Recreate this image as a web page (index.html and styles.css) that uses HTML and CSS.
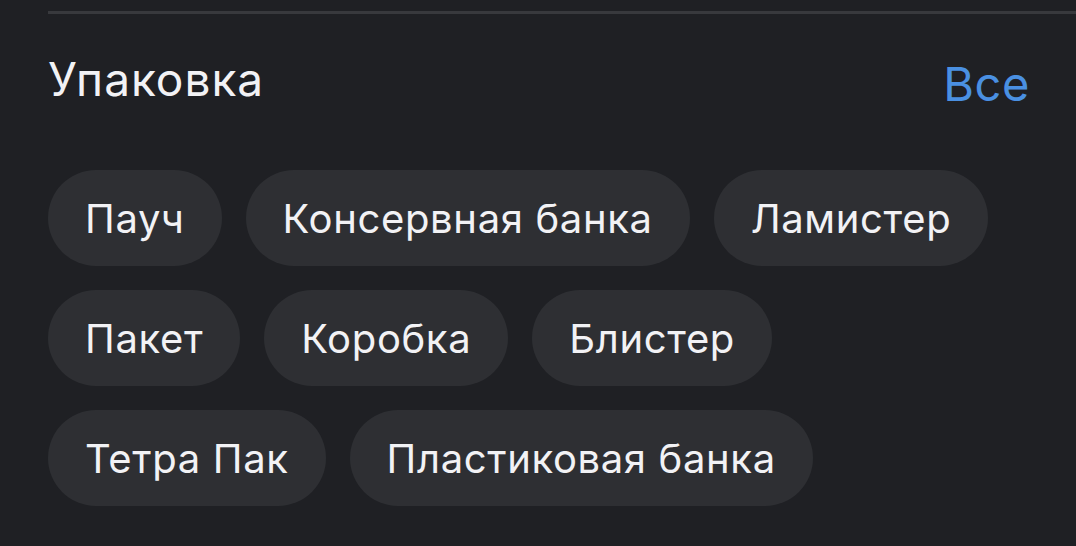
FILE: index.html
```html
<!DOCTYPE html>
<html lang="ru">
<head>
<meta charset="utf-8">
<link rel="stylesheet" href="styles.css">
</head>
<body>
<section class="section">
  <div class="divider"></div>
  <div class="header">
    <h2 class="title">Упаковка</h2>
    <a class="all">Все</a>
  </div>
  <div class="chips">
    <span class="chip">Пауч</span>
    <span class="chip">Консервная банка</span>
    <span class="chip">Ламистер</span>
    <span class="chip">Пакет</span>
    <span class="chip">Коробка</span>
    <span class="chip">Блистер</span>
    <span class="chip">Тетра Пак</span>
    <span class="chip">Пластиковая банка</span>
  </div>
</section>
</body>
</html>
```
FILE: styles.css
```css
html, body {
  margin: 0;
  padding: 0;
  background: #1f2024;
  height: 100%;
  overflow: hidden;
}
body {
  font-family: Inter, "Noto Sans", sans-serif;
  color: #f2f2f5;
}
.section {
  padding-left: 48px;
  padding-top: 11px;
}
.divider {
  height: 3px;
  background: #38393d;
}
.header {
  display: flex;
  justify-content: space-between;
  align-items: flex-start;
  padding-right: 46px;
  margin-top: 37px;
}
.title {
  margin: 0;
  font-size: 46px;
  font-weight: 400;
  line-height: 56px;
  letter-spacing: 1px;
}
.all {
  font-size: 47px;
  line-height: 56px;
  margin-top: 5px;
  letter-spacing: 0.6px;
  color: #4a90e2;
}
.chips {
  display: flex;
  flex-wrap: wrap;
  gap: 24px;
  margin-top: 58px;
  padding-right: 48px;
}
.chip {
  height: 96px;
  display: inline-flex;
  align-items: center;
  padding: 0 37px;
  border-radius: 48px;
  background: #2e2f33;
  font-size: 40px;
  letter-spacing: 0.65px;
}
```
